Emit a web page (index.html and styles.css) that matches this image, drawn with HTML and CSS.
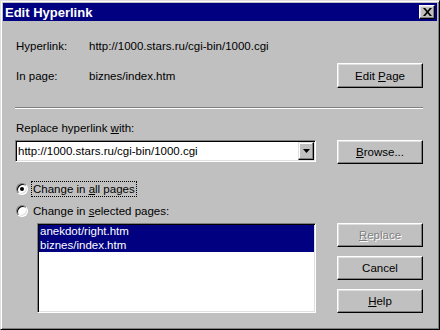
FILE: index.html
```html
<!DOCTYPE html>
<html lang="en">
<head>
    <meta charset="UTF-8">
    <title>Edit Hyperlink</title>
    <link rel="stylesheet" href="styles.css">
</head>
<body>
    <div class="window">
        <div class="titlebar">
            <span class="title">Edit Hyperlink</span>
            <button class="close-button">
                <svg viewBox="0 0 9 8" width="9" height="8">
                    <path d="M0 0h2.2l2.3 2.7 2.3-2.7h2.2l-3.4 4 3.4 4h-2.2l-2.3-2.7-2.3 2.7h-2.2l3.4-4z"/>
                </svg>
            </button>
        </div>

        <div class="dialog-body">
            <div class="info-row">
                <span class="info-label">Hyperlink:</span>
                <span class="info-value">http://1000.stars.ru/cgi-bin/1000.cgi</span>
            </div>
            <div class="info-row page-row">
                <span class="info-label">In page:</span>
                <span class="info-value">biznes/index.htm</span>
                <button class="btn">Edit <u>P</u>age</button>
            </div>

            <div class="separator"></div>

            <div class="field-label">Replace hyperlink <u>w</u>ith:</div>
            <div class="combo-row">
                <div class="combo">
                    <span class="combo-text">http://1000.stars.ru/cgi-bin/1000.cgi</span>
                    <span class="combo-arrow">
                        <svg viewBox="0 0 7 4" width="7" height="4"><path d="M0 0h7l-3.5 4z"/></svg>
                    </span>
                </div>
                <button class="btn"><u>B</u>rowse...</button>
            </div>

            <div class="radio-row first-radio">
                <span class="radio checked"></span>
                <span class="radio-text focused">Change in <u>a</u>ll pages</span>
            </div>
            <div class="radio-row">
                <span class="radio"></span>
                <span class="radio-text">Change in <u>s</u>elected pages:</span>
            </div>

            <div class="pages-row">
                <div class="page-list">
                    <div class="page-item selected">anekdot/right.htm</div>
                    <div class="page-item selected">biznes/index.htm</div>
                </div>
                <div class="button-col">
                    <button class="btn disabled"><u>R</u>eplace</button>
                    <button class="btn">Cancel</button>
                    <button class="btn"><u>H</u>elp</button>
                </div>
            </div>
        </div>
    </div>
</body>
</html>
```

FILE: styles.css
```css
* {
    box-sizing: border-box;
}

body {
    margin: 0;
    font-family: 'Liberation Sans', Arial, sans-serif;
    font-size: 11.5px;
    color: #000;
    background-color: #c0c0c0;
}

.window {
    width: 440px;
    height: 330px;
    padding: 2px;
    background-color: #c0c0c0;
    border: 1px solid;
    border-color: #dfdfdf #000 #000 #dfdfdf;
    box-shadow: inset 1px 1px #fff, inset -1px -1px #808080;
}

.titlebar {
    display: flex;
    align-items: center;
    height: 18px;
    padding: 0 2px;
    background-color: #000080;
}

.title {
    color: #fff;
    font-weight: bold;
    font-size: 13px;
}

.close-button {
    display: flex;
    align-items: center;
    justify-content: center;
    width: 16px;
    height: 14px;
    margin-left: auto;
    padding: 0;
    background-color: #c0c0c0;
    border: 1px solid;
    border-color: #fff #000 #000 #fff;
    box-shadow: inset -1px -1px #808080, inset 1px 1px #dfdfdf;
}

.close-button svg {
    fill: #000;
}

.dialog-body {
    padding: 18px 14px 0 12px;
}

.info-row {
    display: flex;
    align-items: center;
    height: 14px;
}

.info-label {
    width: 74px;
    padding-left: 1px;
}

.page-row {
    height: 25px;
    margin-top: 10px;
}

.page-row .btn {
    height: 25px;
    margin-left: auto;
}

.btn {
    width: 86px;
    height: 24px;
    padding: 0;
    font-family: inherit;
    font-size: 11.5px;
    color: #000;
    background-color: #c0c0c0;
    border: 1px solid;
    border-color: #fff #000 #000 #fff;
    box-shadow: inset -1px -1px #808080, inset 1px 1px #dfdfdf;
}

.btn.disabled {
    color: #808080;
    text-shadow: 1px 1px #fff;
}

.separator {
    margin-top: 19px;
    border-top: 1px solid #808080;
    border-bottom: 1px solid #fff;
}

.field-label {
    margin-top: 12px;
    padding-left: 1px;
    line-height: 14px;
}

.combo-row {
    display: flex;
    justify-content: space-between;
    margin-top: 5px;
}

.combo {
    display: flex;
    align-items: center;
    width: 301px;
    height: 22px;
    padding: 1px;
    background-color: #fff;
    border: 1px solid;
    border-color: #808080 #fff #fff #808080;
    box-shadow: inset 1px 1px #000, inset -1px -1px #dfdfdf;
}

.combo-text {
    flex: 1;
    padding-left: 1px;
}

.combo-arrow {
    display: flex;
    align-items: center;
    justify-content: center;
    width: 16px;
    height: 18px;
    background-color: #c0c0c0;
    border: 1px solid;
    border-color: #dfdfdf #000 #000 #dfdfdf;
    box-shadow: inset -1px -1px #808080, inset 1px 1px #fff;
}

.combo-arrow svg {
    fill: #000;
}

.radio-row {
    display: flex;
    align-items: center;
    height: 17px;
    margin-top: 5px;
    padding-left: 1px;
}

.radio-row.first-radio {
    margin-top: 16px;
}

.radio {
    position: relative;
    width: 12px;
    height: 12px;
    border-radius: 50%;
    background-color: #fff;
    border: 1px solid;
    border-color: #808080 #fff #fff #808080;
    box-shadow: inset 1px 1px #000, inset -1px -1px #dfdfdf;
}

.radio.checked::after {
    content: "";
    position: absolute;
    top: 3px;
    left: 3px;
    width: 4px;
    height: 4px;
    border-radius: 50%;
    background-color: #000;
}

.radio-text {
    margin-left: 3px;
    padding: 1px 1px;
    border: 1px dotted transparent;
}

.radio-text.focused {
    border-color: #000;
}

.pages-row {
    display: flex;
    justify-content: space-between;
    margin-top: 4px;
}

.page-list {
    width: 279px;
    height: 90px;
    margin-left: 22px;
    background-color: #fff;
    border: 1px solid;
    border-color: #808080 #fff #fff #808080;
    box-shadow: inset 1px 1px #000, inset -1px -1px #dfdfdf;
    padding: 1px;
}

.page-item {
    height: 13.5px;
    line-height: 13.5px;
    padding-left: 1px;
}

.page-item.selected {
    color: #fff;
    background-color: #000080;
}

.button-col {
    display: flex;
    flex-direction: column;
    gap: 9px;
}
```
